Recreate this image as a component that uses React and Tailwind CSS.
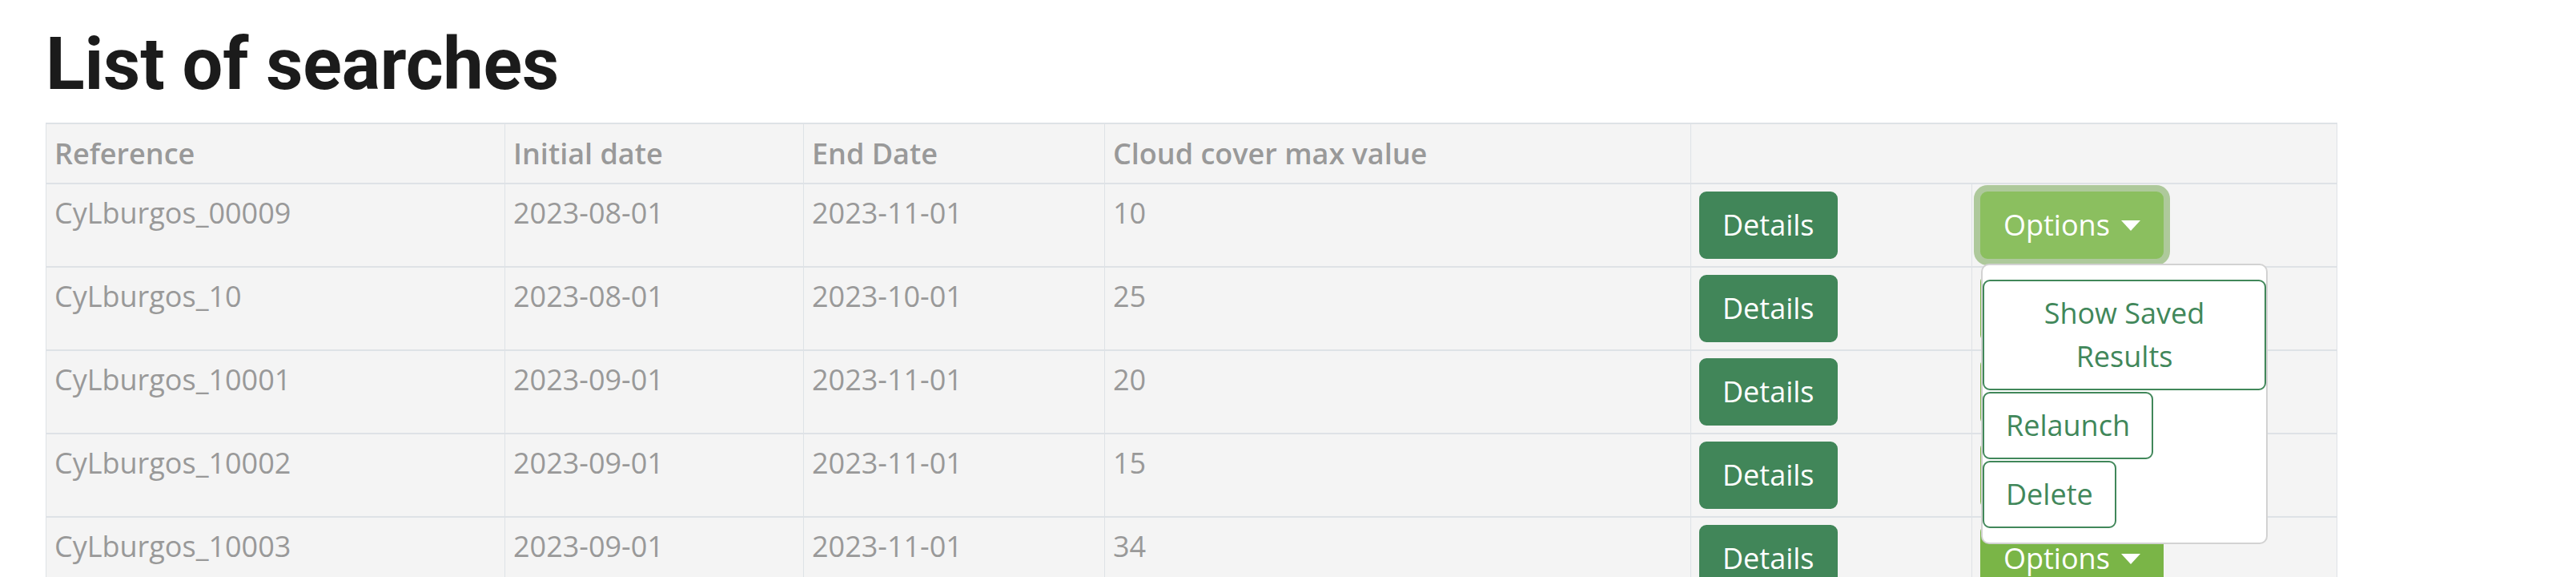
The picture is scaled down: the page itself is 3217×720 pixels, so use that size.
import React from "react";

const rows = [
  ["CyLburgos_00009", "2023-08-01", "2023-11-01", "10"],
  ["CyLburgos_10", "2023-08-01", "2023-10-01", "25"],
  ["CyLburgos_10001", "2023-09-01", "2023-11-01", "20"],
  ["CyLburgos_10002", "2023-09-01", "2023-11-01", "15"],
  ["CyLburgos_10003", "2023-09-01", "2023-11-01", "34"],
];

function Caret() {
  return (
    <span className="inline-block w-0 h-0 ml-[14px] align-[0.18em] border-x-[12px] border-x-transparent border-t-[13px] border-t-white border-b-0"></span>
  );
}

function Menu() {
  return (
    <div className="absolute left-[1px] top-full mt-[6px] z-10 w-[358px] bg-white border-2 border-[#d2d2d2] rounded-[10px] py-[18px] flex flex-col items-start gap-[2px]">
      <button className="w-full text-center bg-white border-2 border-[#41875a] rounded-[9px] px-[27px] py-[13px] text-[36px] leading-[54px] text-[#41875a]">
        Show Saved Results
      </button>
      <button className="text-left bg-white border-2 border-[#41875a] rounded-[9px] px-[27px] py-[13px] text-[36px] leading-[54px] text-[#41875a]">
        Relaunch
      </button>
      <button className="text-left bg-white border-2 border-[#41875a] rounded-[9px] px-[27px] py-[13px] text-[36px] leading-[54px] text-[#41875a]">
        Delete
      </button>
    </div>
  );
}

export default function App() {
  const cell = "border-x border-y-2 border-[#dee2e6] px-[10px] py-[9px] align-top";
  const th = "border-x border-y-2 border-[#dee2e6] px-[10px] py-[9.5px] align-top text-left font-semibold";
  return (
    <div
      className="bg-white min-h-[720px] pl-[57px] pt-[27px] text-[#999999]"
      style={{ fontFamily: '"Open Sans", "Liberation Sans", sans-serif' }}
    >
      <h1
        className="text-[90px] leading-[108px] font-bold text-[#1b1b1b] mb-[18px] tracking-[-0.2px]"
        style={{ fontFamily: 'Roboto, "Liberation Sans", sans-serif' }}
      >
        List of searches
      </h1>
      <table className="table-fixed border-collapse w-[2861px] bg-[#f4f4f4] text-[36px] leading-[54px]">
        <colgroup>
          <col className="w-[573px]" />
          <col className="w-[373px]" />
          <col className="w-[376px]" />
          <col className="w-[732px]" />
          <col className="w-[351px]" />
          <col className="w-[456px]" />
        </colgroup>
        <thead>
          <tr>
            <th className={th}>Reference</th>
            <th className={th}>Initial date</th>
            <th className={th}>End Date</th>
            <th className={th}>Cloud cover max value</th>
            <th className={th} colSpan={2}></th>
          </tr>
        </thead>
        <tbody>
          {rows.map((r, i) => (
            <tr key={i}>
              <td className={cell}>{r[0]}</td>
              <td className={cell}>{r[1]}</td>
              <td className={cell}>{r[2]}</td>
              <td className={cell}>{r[3]}</td>
              <td className={cell}>
                <button className="bg-[#418659] border-2 border-[#418659] text-white rounded-[9px] px-[27px] py-[13px] text-[36px] leading-[54px]">
                  Details
                </button>
              </td>
              <td className={cell}>
                <div className="relative inline-block">
                  {i === 0 ? (
                    <button className="bg-[#8bbf5f] border-2 border-[#8bbf5f] text-white rounded-[9px] pl-[27px] pr-[27px] py-[13px] text-[36px] leading-[54px] shadow-[0_0_0_8px_#aec99b] whitespace-nowrap">
                      Options
                      <Caret />
                    </button>
                  ) : (
                    <button className="bg-[#7ab547] border-2 border-[#7ab547] text-white rounded-[9px] pl-[27px] pr-[27px] py-[13px] text-[36px] leading-[54px] whitespace-nowrap">
                      Options
                      <Caret />
                    </button>
                  )}
                  {i === 0 && <Menu />}
                </div>
              </td>
            </tr>
          ))}
        </tbody>
      </table>
    </div>
  );
}
